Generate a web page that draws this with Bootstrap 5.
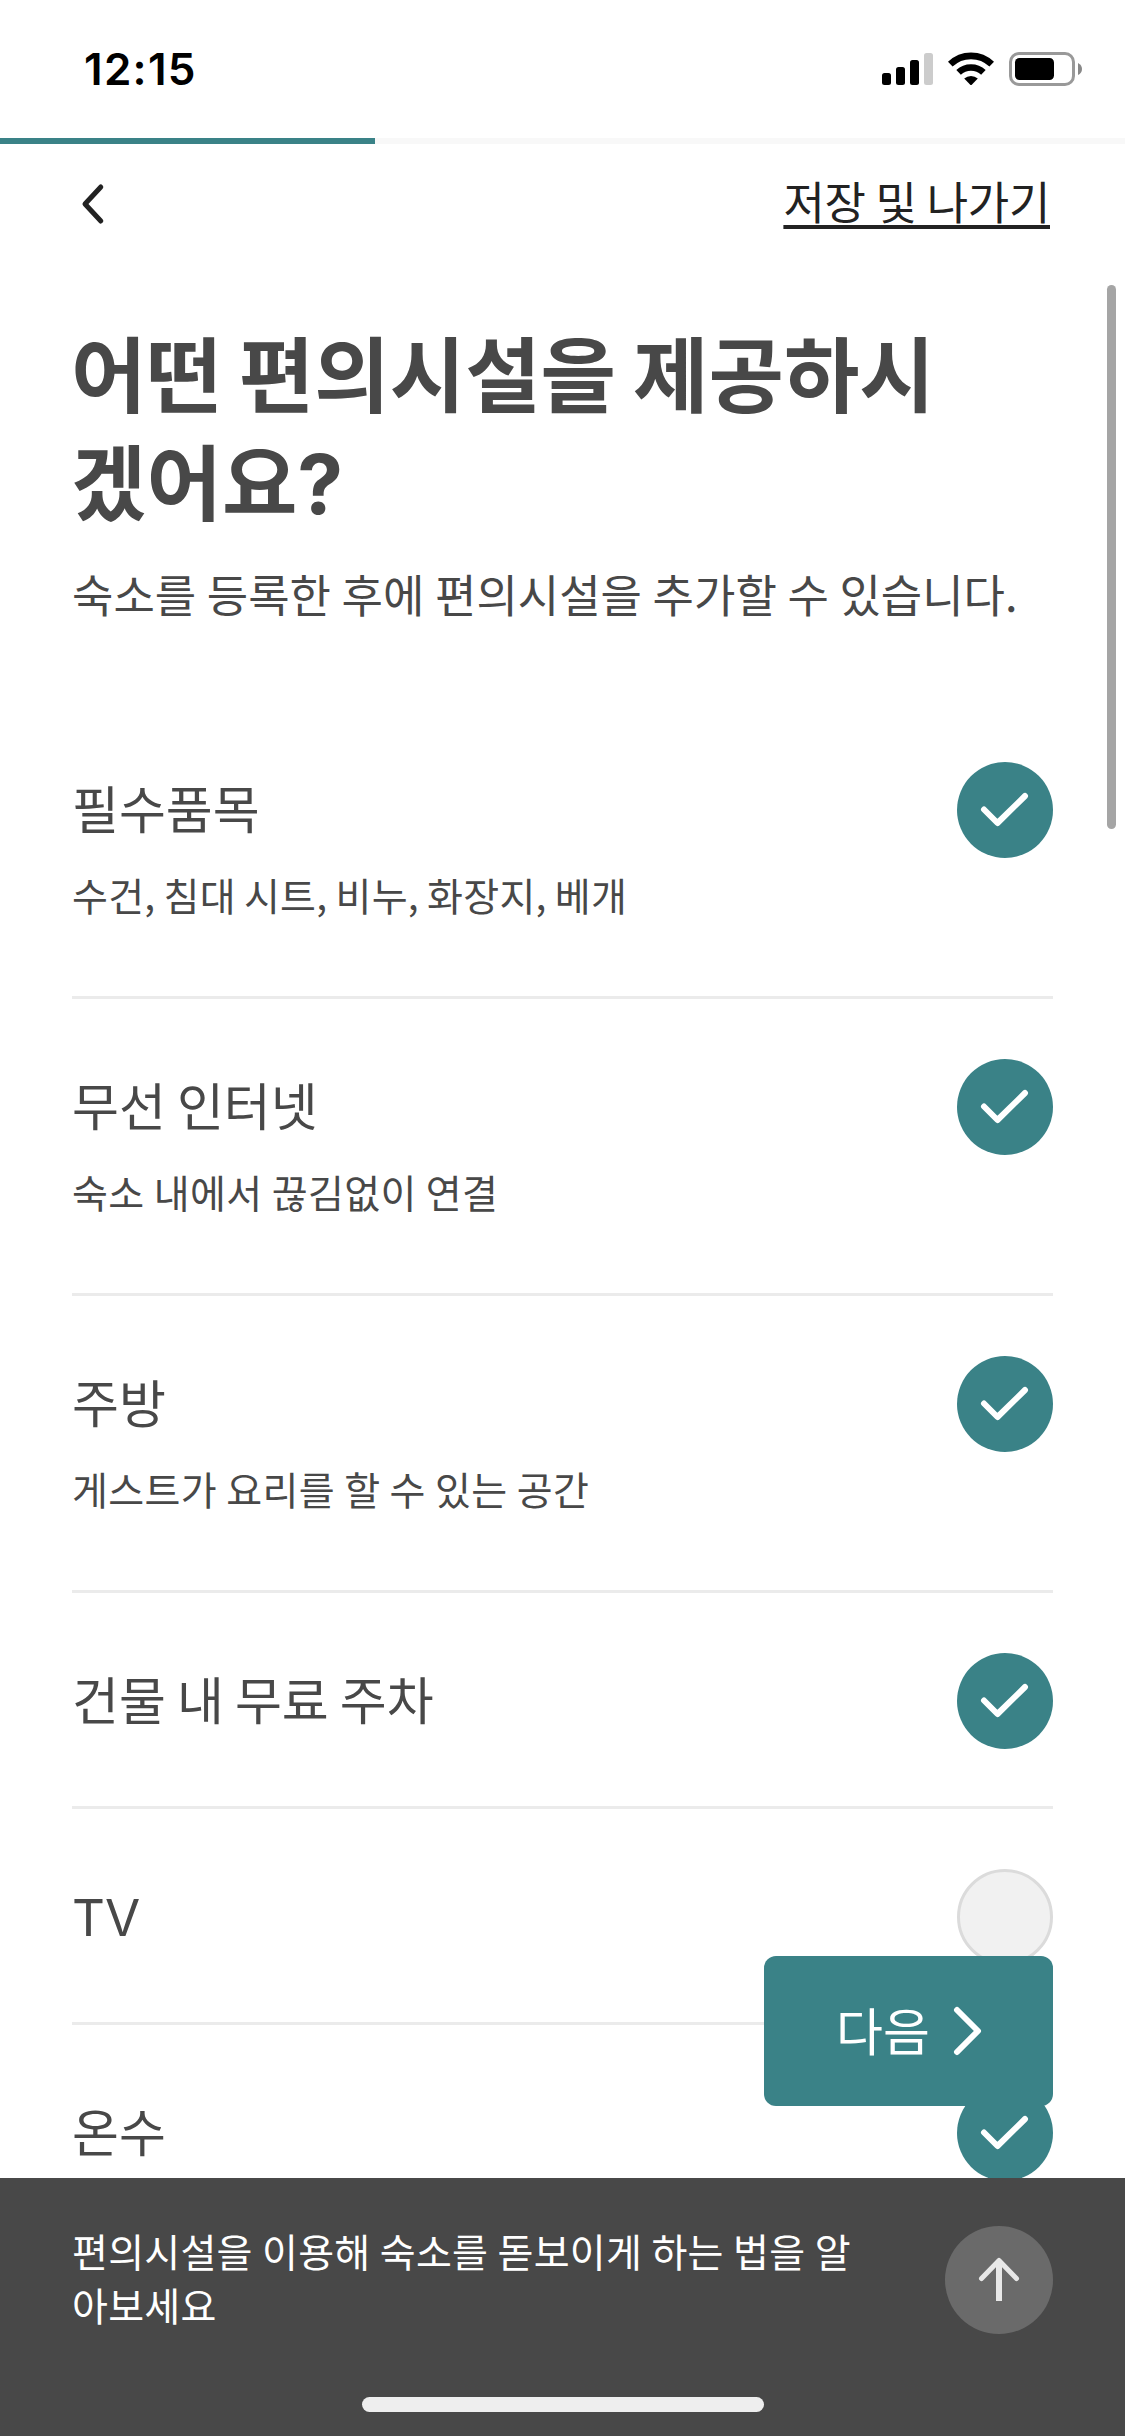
<!DOCTYPE html>
<html lang="ko">
<head>
<meta charset="utf-8">
<meta name="viewport" content="width=device-width, initial-scale=1">
<title>편의시설</title>
<link href="https://cdn.jsdelivr.net/npm/bootstrap@5.3.0/dist/css/bootstrap.min.css" rel="stylesheet">
<style>
  :root { --teal: #3a8287; --ink: #484848; }
  body { font-family: "Noto Sans CJK KR", sans-serif; color: var(--ink); background: #fff; }
  .screen { width: 1125px; height: 2436px; }
  .screen > * { flex-shrink: 0; }
  .status-bar { height: 138px; padding: 0 43px 0 84px; color: #000; }
  .clock { font: 600 44px/54px Inter, sans-serif; letter-spacing: 1.3px; }
  .step-progress { height: 6px; background: #f8f8f8; --bs-progress-bar-bg: var(--teal); border-radius: 0; }
  .top-nav { height: 111px; padding: 0 75px 0 81px; }
  .back-icon { margin-top: 9px; }
  .exit-link { font-size: 45px; line-height: 66px; margin-top: 3px; letter-spacing: -.3px; word-spacing: -2.3px; color: #222; text-decoration: underline 4px; text-underline-offset: 5px; text-decoration-skip-ink: none; }
  .side-pad { padding-left: 72px; padding-right: 72px; }
  .latin { font-family: Inter, sans-serif; line-height: 0; }
  .page-title { font-size: 82px; line-height: 108px; font-weight: 700; word-spacing: -6px; margin: 62px 0 0 -1px; }
  .page-note { font-size: 45px; line-height: 66px; word-spacing: -2px; margin: 28px 0 0; }
  .amenities { margin-top: 75px; }
  .amenity { height: 216px; padding-top: 60px; border-bottom: 3px solid #ebebeb; }
  .amenity.tall { height: 297px; }
  .amenity-name { font-size: 51px; line-height: 60px; margin-top: 15px; word-spacing: -3.2px; }
  .amenity-note { font-size: 39px; line-height: 54px; margin-top: 30px; word-spacing: -2.1px; letter-spacing: .37px; }
  .amenity-note.listed { word-spacing: -3.2px; letter-spacing: .3px; }
  .tick { width: 96px; height: 96px; flex: none; }
  .tick.on { background: var(--teal); }
  .tick.off { background: #f1f1f1; border: 3px solid #dbdbdb; }
  .content-area { height: 1923px; }
  .next-btn, .next-btn:hover { right: 72px; bottom: 330px; width: 289px; height: 150px; border-radius: 12px; background: var(--teal); color: #fff; font-size: 51px; line-height: 60px; padding: 0 0 0 72px; gap: 23px; }
  .next-btn span { padding-bottom: 5px; }
  .scroll-thumb { top: 285px; right: 9px; width: 9px; height: 544px; background: #a5a5a5; }
  .tip-bar { height: 258px; background: var(--ink); color: #fff; }
  .tip-text { font-size: 39px; line-height: 54px; width: 800px; padding-top: 45px; letter-spacing: .25px; word-spacing: -1.8px; }
  .up-btn { width: 108px; height: 108px; margin-top: 48px; background: #6a6a6a; }
  .home-bar { width: 402px; height: 15px; bottom: 24px; background: #eee; }
</style>
</head>
<body>
<div class="screen position-relative overflow-hidden d-flex flex-column">
  <header class="status-bar d-flex align-items-center justify-content-between">
    <div class="clock">12:15</div>
    <svg width="201" height="34" viewBox="881 52 201 34">
      <rect x="882" y="73" width="9" height="12" rx="2.5"/>
      <rect x="896" y="67" width="9" height="18" rx="2.5"/>
      <rect x="910" y="60" width="9" height="25" rx="2.5"/>
      <rect x="924" y="53" width="9" height="32" rx="2.5" fill="#ccc"/>
      <g fill="none" stroke="#000" stroke-width="6.6">
        <path d="M950.3 64.2a29.8 29.8 0 0 1 41.4 0"/>
        <path d="M958.6 72.4a18 18 0 0 1 24.8 0"/>
      </g>
      <path d="M964.2 78.5a10.5 10.5 0 0 1 13.6 0l-5.8 6q-1 1-2 0z"/>
      <rect x="1010.5" y="53.5" width="63" height="31" rx="8.5" fill="none" stroke="#999" stroke-width="3"/>
      <rect x="1015" y="58" width="39" height="22" rx="4.5"/>
      <path d="M1078 63q4 2 4 6t-4 6z" fill="#888"/>
    </svg>
  </header>
  <div class="progress step-progress"><div class="progress-bar" style="width:33.333%"></div></div>

  <nav class="top-nav d-flex align-items-center justify-content-between">
    <svg class="back-icon" width="24" height="42" viewBox="0 0 24 42" fill="none" stroke="#222" stroke-width="5" stroke-linecap="round" stroke-linejoin="round"><path d="M19.8 4L4 21 19.8 38"/></svg>
    <a href="#" class="exit-link">저장 및 나가기</a>
  </nav>

  <main class="side-pad content-area overflow-hidden">
    <h1 class="page-title">어떤 편의시설을 제공하시<br>겠어요<span class="latin">?</span></h1>
    <p class="page-note text-nowrap">숙소를 등록한 후에 편의시설을 추가할 수 있습니다.</p>
    <div class="amenities">
      <div class="amenity tall d-flex justify-content-between">
        <div><div class="amenity-name">필수품목</div><div class="amenity-note listed">수건, 침대 시트, 비누, 화장지, 베개</div></div>
        <span class="tick on rounded-circle"><svg class="d-block" width="96" height="96" fill="none" stroke="#fff" stroke-width="6" stroke-linecap="round" stroke-linejoin="round"><path d="M27 47.5L40.5 61 68 34"/></svg></span>
      </div>
      <div class="amenity tall d-flex justify-content-between">
        <div><div class="amenity-name">무선 인터넷</div><div class="amenity-note">숙소 내에서 끊김없이 연결</div></div>
        <span class="tick on rounded-circle"><svg class="d-block" width="96" height="96" fill="none" stroke="#fff" stroke-width="6" stroke-linecap="round" stroke-linejoin="round"><path d="M27 47.5L40.5 61 68 34"/></svg></span>
      </div>
      <div class="amenity tall d-flex justify-content-between">
        <div><div class="amenity-name">주방</div><div class="amenity-note">게스트가 요리를 할 수 있는 공간</div></div>
        <span class="tick on rounded-circle"><svg class="d-block" width="96" height="96" fill="none" stroke="#fff" stroke-width="6" stroke-linecap="round" stroke-linejoin="round"><path d="M27 47.5L40.5 61 68 34"/></svg></span>
      </div>
      <div class="amenity d-flex justify-content-between">
        <div class="amenity-name">건물 내 무료 주차</div>
        <span class="tick on rounded-circle"><svg class="d-block" width="96" height="96" fill="none" stroke="#fff" stroke-width="6" stroke-linecap="round" stroke-linejoin="round"><path d="M27 47.5L40.5 61 68 34"/></svg></span>
      </div>
      <div class="amenity d-flex justify-content-between">
        <div class="amenity-name"><span class="latin">TV</span></div>
        <span class="tick off rounded-circle"></span>
      </div>
      <div class="amenity d-flex justify-content-between">
        <div class="amenity-name">온수</div>
        <span class="tick on rounded-circle"><svg class="d-block" width="96" height="96" fill="none" stroke="#fff" stroke-width="6" stroke-linecap="round" stroke-linejoin="round"><path d="M27 47.5L40.5 61 68 34"/></svg></span>
      </div>
    </div>
  </main>

  <footer class="tip-bar side-pad position-relative d-flex justify-content-between">
    <div class="tip-text">편의시설을 이용해 숙소를 돋보이게 하는 법을 알<br>아보세요</div>
    <button class="up-btn btn rounded-circle border-0 p-0" aria-label="위로">
      <svg class="d-block" width="108" height="108" fill="none" stroke="#e8e8e8" stroke-width="5" stroke-linecap="round" stroke-linejoin="round"><path d="M36.5 52.5L54 34.5 71.5 52.5"/><path d="M54 35V75" stroke-width="6" stroke-linecap="butt"/></svg>
    </button>
    <div class="home-bar position-absolute start-50 translate-middle-x rounded-pill"></div>
  </footer>
  <button class="next-btn btn position-absolute d-flex align-items-center border-0">
    <span>다음</span>
    <svg width="30" height="50" viewBox="0 0 30 50" fill="none" stroke="#fff" stroke-width="6" stroke-linecap="round" stroke-linejoin="round"><path d="M4 4L25 25 4 46"/></svg>
  </button>
  <div class="scroll-thumb position-absolute rounded-pill"></div>
</div>
<script src="https://cdn.jsdelivr.net/npm/bootstrap@5.3.0/dist/js/bootstrap.bundle.min.js"></script>
</body>
</html>
